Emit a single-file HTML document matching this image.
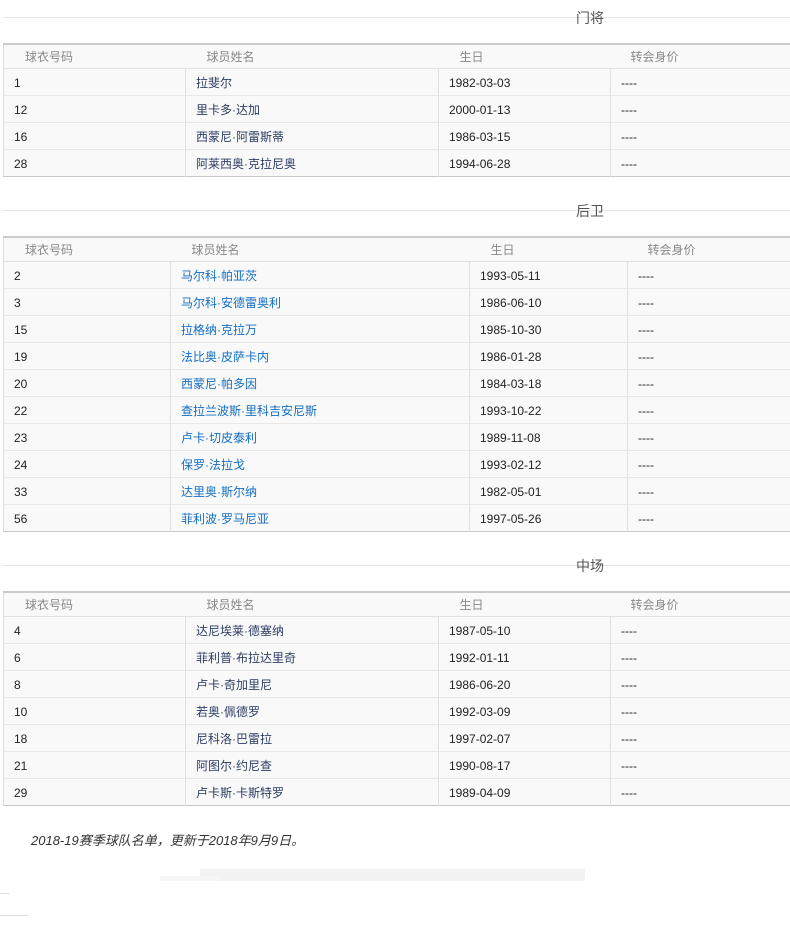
<!DOCTYPE html>
<html><head><meta charset="utf-8"><style>
*{margin:0;padding:0;box-sizing:border-box}
body{width:790px;height:935px;background:#fff;font-family:"Liberation Sans","Noto Sans CJK SC",sans-serif;font-size:12px;color:#222;position:relative;overflow:hidden}
.sec{position:absolute;left:3px;right:0;border-top:1px solid #e3e3e3}
.sec span{position:absolute;left:573px;top:-10px;font-size:14px;color:#555;background:transparent}
table{position:absolute;left:3px;width:787px;border-collapse:collapse;table-layout:fixed;background:#f9f9f9;border-top:2px solid #cbcbcb;border-bottom:1px solid #c8c8c8;border-left:1px solid #ddd}
th{height:24px;font-weight:normal;color:#888;font-size:12px;text-align:left;border-bottom:1px solid #e0e0e0;line-height:20px;padding-top:2px}
td{height:27px;border-bottom:1px solid #e8e8e8;border-left:1px solid #e0e0e0;padding-left:10px;line-height:24px;padding-top:2px}
td:first-child{border-left:none}
tr:last-child td{border-bottom:none}
.a td:nth-child(2){color:#2c3d63}
.b td:nth-child(2){color:#136ec2}
</style></head><body>

<div class="sec" style="top:17px"><span>门将</span></div>
<table class="a" style="top:43px">
<colgroup><col style="width:182px"><col style="width:253px"><col style="width:172px"><col></colgroup>
<tr><th style="padding-left:21px">球衣号码</th><th style="padding-left:21px">球员姓名</th><th style="padding-left:21px">生日</th><th style="padding-left:20px">转会身价</th></tr>
<tr><td>1</td><td>拉斐尔</td><td>1982-03-03</td><td>----</td></tr>
<tr><td>12</td><td>里卡多·达加</td><td>2000-01-13</td><td>----</td></tr>
<tr><td>16</td><td>西蒙尼·阿雷斯蒂</td><td>1986-03-15</td><td>----</td></tr>
<tr><td>28</td><td>阿莱西奥·克拉尼奥</td><td>1994-06-28</td><td>----</td></tr>
</table>

<div class="sec" style="top:210px"><span>后卫</span></div>
<table class="b" style="top:236px">
<colgroup><col style="width:167px"><col style="width:299px"><col style="width:158px"><col></colgroup>
<tr><th style="padding-left:21px">球衣号码</th><th style="padding-left:21px">球员姓名</th><th style="padding-left:21px">生日</th><th style="padding-left:20px">转会身价</th></tr>
<tr><td>2</td><td>马尔科·帕亚茨</td><td>1993-05-11</td><td>----</td></tr>
<tr><td>3</td><td>马尔科·安德雷奥利</td><td>1986-06-10</td><td>----</td></tr>
<tr><td>15</td><td>拉格纳·克拉万</td><td>1985-10-30</td><td>----</td></tr>
<tr><td>19</td><td>法比奥·皮萨卡内</td><td>1986-01-28</td><td>----</td></tr>
<tr><td>20</td><td>西蒙尼·帕多因</td><td>1984-03-18</td><td>----</td></tr>
<tr><td>22</td><td>查拉兰波斯·里科吉安尼斯</td><td>1993-10-22</td><td>----</td></tr>
<tr><td>23</td><td>卢卡·切皮泰利</td><td>1989-11-08</td><td>----</td></tr>
<tr><td>24</td><td>保罗·法拉戈</td><td>1993-02-12</td><td>----</td></tr>
<tr><td>33</td><td>达里奥·斯尔纳</td><td>1982-05-01</td><td>----</td></tr>
<tr><td>56</td><td>菲利波·罗马尼亚</td><td>1997-05-26</td><td>----</td></tr>
</table>

<div class="sec" style="top:565px"><span>中场</span></div>
<table class="a" style="top:591px">
<colgroup><col style="width:182px"><col style="width:253px"><col style="width:172px"><col></colgroup>
<tr><th style="padding-left:21px">球衣号码</th><th style="padding-left:21px">球员姓名</th><th style="padding-left:21px">生日</th><th style="padding-left:20px">转会身价</th></tr>
<tr><td>4</td><td>达尼埃莱·德塞纳</td><td>1987-05-10</td><td>----</td></tr>
<tr><td>6</td><td>菲利普·布拉达里奇</td><td>1992-01-11</td><td>----</td></tr>
<tr><td>8</td><td>卢卡·奇加里尼</td><td>1986-06-20</td><td>----</td></tr>
<tr><td>10</td><td>若奥·佩德罗</td><td>1992-03-09</td><td>----</td></tr>
<tr><td>18</td><td>尼科洛·巴雷拉</td><td>1997-02-07</td><td>----</td></tr>
<tr><td>21</td><td>阿图尔·约尼查</td><td>1990-08-17</td><td>----</td></tr>
<tr><td>29</td><td>卢卡斯·卡斯特罗</td><td>1989-04-09</td><td>----</td></tr>
</table>

<div style="position:absolute;left:31px;top:830px;font-size:13px;font-style:italic;color:#333">2018-19赛季球队名单，更新于2018年9月9日。</div>
<div style="position:absolute;left:200px;top:869px;width:385px;height:12px;background:#f2f2f2"></div>
<div style="position:absolute;left:160px;top:876px;width:60px;height:5px;background:#f5f5f5"></div>
<div style="position:absolute;left:0;top:893px;width:9px;height:1px;background:#ddd"></div>
<div style="position:absolute;left:0;top:915px;width:28px;height:1px;background:#ddd"></div>
</body></html>
